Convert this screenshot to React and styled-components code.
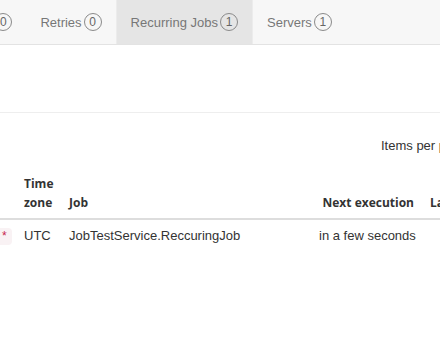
import React from 'react';
import styled, { createGlobalStyle } from 'styled-components';

const GlobalStyle = createGlobalStyle`
    html, body {
        margin: 0;
        padding: 0;
        background: #fff;
        overflow: hidden;
    }
    body {
        font-family: "Liberation Sans", Arial, sans-serif;
        font-size: 13px;
        color: #333;
    }
`;

const Page = styled.div`
    width: 440px;
    height: 354px;
    overflow: hidden;
`;

const NavBar = styled.div`
    height: 44px;
    background: #f7f7f7;
    border-bottom: 1px solid #e3e3e3;
    overflow: hidden;
`;

const TabList = styled.ul`
    display: flex;
    list-style: none;
    margin: 0 0 0 -57px;
    padding: 0;
    height: 100%;
`;

const Tab = styled.li`
    display: flex;
    align-items: center;
    padding: 0 14px;
    height: 100%;
    color: #777;
    white-space: nowrap;
    background: ${props => (props.active ? '#e5e5e5' : 'transparent')};
    border-left: ${props => (props.active ? '1px solid #ececec' : 'none')};
    border-right: ${props => (props.active ? '1px solid #ececec' : 'none')};
`;

const Badge = styled.span`
    display: inline-flex;
    align-items: center;
    justify-content: center;
    width: 16px;
    height: 16px;
    margin-left: 2px;
    border: 1px solid #8a8a8a;
    border-radius: 50%;
    font-size: 12px;
    color: #666;
`;

const TitleArea = styled.div`
    height: 67px;
    border-bottom: 1px solid #eeeeee;
`;

const Toolbar = styled.div`
    display: flex;
    justify-content: flex-start;
    padding: 23px 0 0 381px;
    height: 28px;
    line-height: 20px;
    white-space: nowrap;
`;

const Table = styled.table`
    border-collapse: collapse;
    table-layout: fixed;
    width: 600px;
    margin-left: -40px;
`;

const Th = styled.th`
    font-family: "Open Sans", "Liberation Sans", sans-serif;
    font-weight: 700;
    font-size: 12px;
    line-height: 19px;
    color: #333;
    padding: 10px 8px 6px;
    vertical-align: bottom;
    text-align: ${props => props.align || 'left'};
    border-bottom: 2px solid #dddddd;
    white-space: ${props => (props.wrap ? 'normal' : 'nowrap')};
`;

const Td = styled.td`
    padding: 6px 8px 8px;
    line-height: 20px;
    vertical-align: top;
    white-space: nowrap;
    text-align: ${props => props.align || 'left'};
`;

const Cron = styled.code`
    display: inline-block;
    font-family: "Liberation Mono", monospace;
    font-size: 12px;
    line-height: 14px;
    padding: 2px 4px 1px;
    color: #c7254e;
    background: #f9f2f4;
    border-radius: 4px;
`;

const tabs = [
    { name: 'Failed', count: 0 },
    { name: 'Retries', count: 0 },
    { name: 'Recurring Jobs', count: 1, active: true },
    { name: 'Servers', count: 1 },
];

const App = () => (
    <Page>
        <GlobalStyle />
        <NavBar>
            <TabList>
                {tabs.map(t => (
                    <Tab key={t.name} active={t.active}>
                        {t.name}
                        <Badge>{t.count}</Badge>
                    </Tab>
                ))}
            </TabList>
        </NavBar>
        <TitleArea />
        <Toolbar>Items per page</Toolbar>
        <Table>
            <colgroup>
                <col style={{ width: 56 }} />
                <col style={{ width: 45 }} />
                <col style={{ width: 250 }} />
                <col style={{ width: 111 }} />
                <col style={{ width: 138 }} />
            </colgroup>
            <thead>
                <tr>
                    <Th>Cron</Th>
                    <Th wrap>Time zone</Th>
                    <Th>Job</Th>
                    <Th align="right">Next execution</Th>
                    <Th>Last execution</Th>
                </tr>
            </thead>
            <tbody>
                <tr>
                    <Td align="right"><Cron>* * *</Cron></Td>
                    <Td>UTC</Td>
                    <Td>JobTestService.ReccuringJob</Td>
                    <Td align="right">in a few seconds</Td>
                    <Td></Td>
                </tr>
            </tbody>
        </Table>
    </Page>
);

export default App;
